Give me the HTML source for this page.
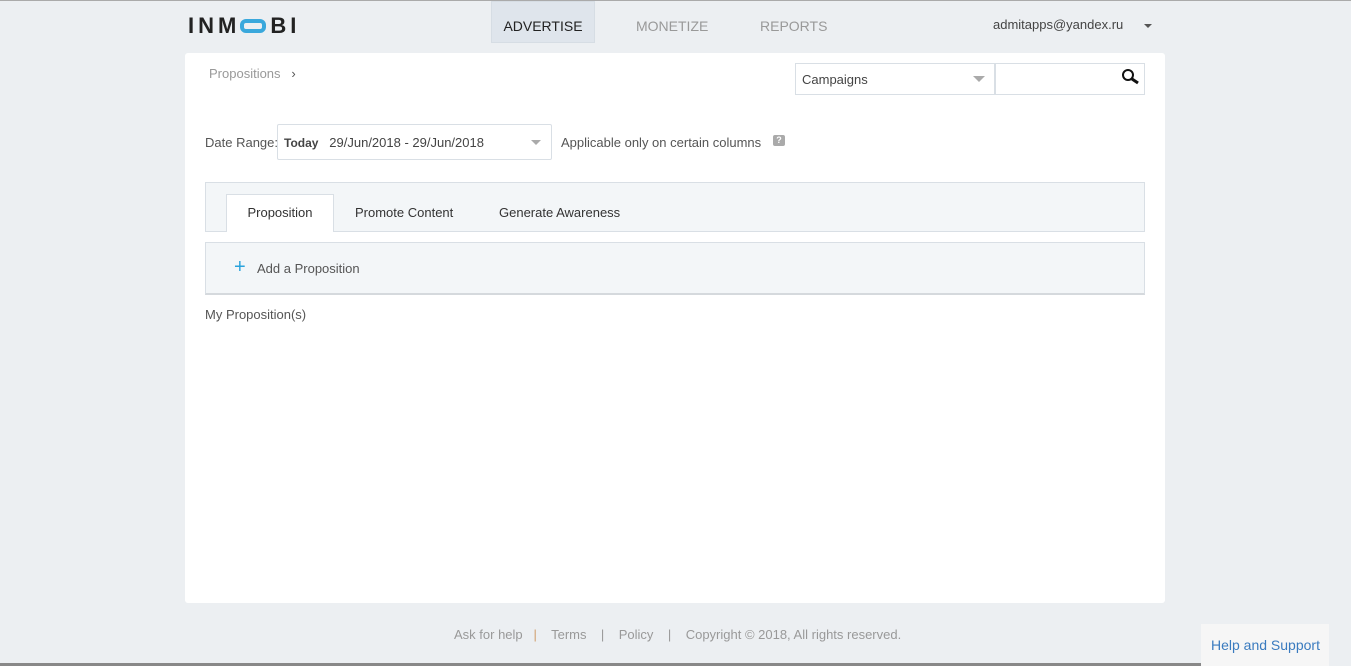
<!DOCTYPE html>
<html><head><style>
*{box-sizing:border-box;margin:0;padding:0}
body{width:1351px;height:666px;background:#eceff2;font-family:"Liberation Sans",sans-serif;position:relative;overflow:hidden;color:#555;font-size:13px}
.a{position:absolute;white-space:nowrap}
</style></head><body>
<div class="a" style="left:0;top:0;width:1351px;height:1px;background:#aaa"></div>
<div class="a" style="left:188px;top:14px;font-size:22px;font-weight:bold;letter-spacing:4px;color:#222;line-height:24px">INM<span style="display:inline-block;width:26px;height:14px;border:4px solid #3aa8dc;border-radius:6px;vertical-align:0px;margin-right:4px"></span>BI</div>
<div class="a" style="left:491px;top:1px;width:104px;height:42px;background:#dfe5ec;border:1px solid #d6dde4;color:#222;font-size:14px;text-align:center;line-height:48px">ADVERTISE</div>
<div class="a" style="left:636px;top:18px;font-size:14px;color:#999">MONETIZE</div>
<div class="a" style="left:760px;top:18px;font-size:14px;color:#999">REPORTS</div>
<div class="a" style="left:993px;top:17px;font-size:13px;color:#444">admitapps@yandex.ru</div>
<div class="a" style="left:1144px;top:24px;border:4px solid transparent;border-top:4px solid #555;border-bottom:0"></div>
<div class="a" style="left:185px;top:53px;width:980px;height:550px;background:#fff;border-radius:3px"></div>
<div class="a" style="left:209px;top:66px;color:#999">Propositions &nbsp;&nbsp;<span style="color:#555">›</span></div>
<div class="a" style="left:795px;top:63px;width:200px;height:32px;border:1px solid #d9dfe5;padding:8px 6px;color:#444">Campaigns</div>
<div class="a" style="left:973px;top:76px;border:6px solid transparent;border-top:6px solid #aaa;border-bottom:0"></div>
<div class="a" style="left:995px;top:63px;width:150px;height:32px;border:1px solid #d9dfe5"></div>
<svg class="a" style="left:1121px;top:68px" width="20" height="18"><circle cx="7" cy="7" r="5" fill="none" stroke="#111" stroke-width="2"/><line x1="11" y1="11" x2="17" y2="15" stroke="#111" stroke-width="3"/></svg>
<div class="a" style="left:205px;top:135px;color:#555">Date Range:</div>
<div class="a" style="left:277px;top:124px;width:275px;height:36px;border:1px solid #d9dfe5;border-radius:2px;padding:10px 6px;color:#444"><b style="font-size:12px">Today</b>&nbsp;&nbsp; 29/Jun/2018 - 29/Jun/2018</div>
<div class="a" style="left:531px;top:140px;border:5px solid transparent;border-top:5px solid #aaa;border-bottom:0"></div>
<div class="a" style="left:561px;top:135px">Applicable only on certain columns</div>
<div class="a" style="left:773px;top:135px;width:12px;height:11px;background:#aaa;border-radius:2px;color:#fff;font-size:9px;text-align:center;line-height:11px;font-weight:bold">?</div>
<div class="a" style="left:205px;top:182px;width:940px;height:50px;background:#f3f6f8;border:1px solid #d9dfe5"></div>
<div class="a" style="left:226px;top:194px;width:108px;height:38px;background:#fff;border:1px solid #d9dfe5;border-bottom:none;text-align:center;line-height:36px;color:#333">Proposition</div>
<div class="a" style="left:355px;top:205px;color:#333">Promote Content</div>
<div class="a" style="left:499px;top:205px;color:#333">Generate Awareness</div>
<div class="a" style="left:205px;top:242px;width:940px;height:53px;background:#f3f6f8;border:1px solid #d9dfe5;border-bottom:2px solid #d5d9dd"></div>
<div class="a" style="left:234px;top:257px;color:#2aa3dc;font-size:20px;line-height:20px">+</div>
<div class="a" style="left:257px;top:261px;color:#555">Add a Proposition</div>
<div class="a" style="left:205px;top:307px;color:#555">My Proposition(s)</div>
<div class="a" style="left:454px;top:627px;color:#999;font-size:13px">Ask for help &nbsp;&nbsp;<span style="color:#d0a070">|</span>&nbsp;&nbsp;&nbsp; Terms &nbsp;&nbsp;&nbsp;|&nbsp;&nbsp;&nbsp; Policy &nbsp;&nbsp;&nbsp;|&nbsp;&nbsp;&nbsp; Copyright © 2018, All rights reserved.</div>
<div class="a" style="left:1201px;top:624px;width:128px;height:42px;background:#f6f6f6;color:#3a7bbf;font-size:14px;padding:13px 10px">Help and Support</div>
<div class="a" style="left:0;top:663px;width:1201px;height:3px;background:#888"></div>
</body></html>
